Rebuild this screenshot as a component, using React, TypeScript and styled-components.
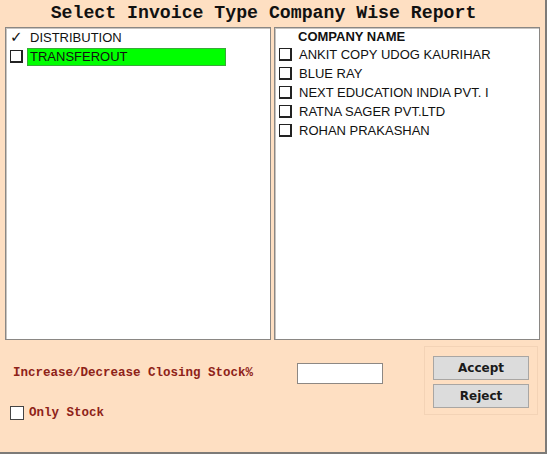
import React from "react";
import styled, { createGlobalStyle } from "styled-components";

const GlobalStyle = createGlobalStyle`
  html, body {
    margin: 0;
    padding: 0;
    background: #ffffff;
  }
`;

const invoiceTypes = [
  { name: "DISTRIBUTION", checked: true, selected: false },
  { name: "TRANSFEROUT", checked: false, selected: true },
];

const companies = [
  "ANKIT COPY UDOG KAURIHAR",
  "BLUE RAY",
  "NEXT EDUCATION INDIA PVT. I",
  "RATNA SAGER PVT.LTD",
  "ROHAN PRAKASHAN",
];

function App() {
  return (
    <>
      <GlobalStyle />
      <Frame>
        <Title>Select Invoice Type Company Wise Report</Title>
        <Panels>
          <ListBox>
            {invoiceTypes.map((t) => (
              <Row key={t.name}>
                {t.checked ? <Tick>✓</Tick> : <Box />}
                <ItemText selected={t.selected}>{t.name}</ItemText>
              </Row>
            ))}
          </ListBox>
          <ListBox>
            <HeaderRow>
              <Spacer />
              <HeaderText>COMPANY NAME</HeaderText>
            </HeaderRow>
            {companies.map((c) => (
              <Row key={c}>
                <Box />
                <ItemText>{c}</ItemText>
              </Row>
            ))}
          </ListBox>
        </Panels>
        <Bottom>
          <Options>
            <StockRow>
              <StockLabel>Increase/Decrease Closing Stock%</StockLabel>
              <PercentInput />
            </StockRow>
            <CheckRow>
              <PlainCheck />
              <Label>Only Stock</Label>
            </CheckRow>
          </Options>
          <ButtonGroup>
            <Button>Accept</Button>
            <Button>Reject</Button>
          </ButtonGroup>
        </Bottom>
      </Frame>
    </>
  );
}

const Frame = styled.div`
  width: 545px;
  height: 452px;
  background: #fedfc2;
  border-right: 2px solid #7d7b78;
  border-bottom: 2px solid #7d7b78;
  display: flex;
  flex-direction: column;
`;

const Title = styled.div`
  height: 27px;
  line-height: 27px;
  text-align: center;
  font-family: "Liberation Mono", "Courier New", monospace;
  font-weight: bold;
  font-size: 18.2px;
  color: #111;
  padding-right: 18px;
`;

const Panels = styled.div`
  display: flex;
  gap: 3px;
  padding-left: 5px;
  height: 313px;
`;

const ListBox = styled.div`
  width: 260px;
  height: 311px;
  background: #fff;
  border: 1px solid #8a8784;
  box-shadow: inset 1px 1px 0 #c8c4c0;
  padding: 0 0 0 4px;
  box-sizing: content-box;
`;

const Row = styled.div`
  display: flex;
  align-items: center;
  height: 19px;
`;

const HeaderRow = styled(Row)`
  height: 17px;
`;

const Box = styled.span`
  width: 10px;
  height: 10px;
  border: 1px solid #222;
  border-right-width: 2px;
  border-bottom-width: 2px;
  background: #fff;
  flex: none;
  margin-right: 4px;
`;

const Tick = styled.span`
  width: 17px;
  font-family: "DejaVu Sans", sans-serif;
  font-weight: bold;
  font-size: 15px;
  line-height: 19px;
  color: #111;
  flex: none;
`;

const Spacer = styled.span`
  width: 17px;
  flex: none;
`;

const ItemText = styled.span<{ selected?: boolean }>`
  font-family: "Liberation Sans", Arial, sans-serif;
  font-size: 13px;
  color: #111;
  line-height: 16px;
  padding-left: 2px;
  border: 1px solid transparent;
  ${(p) =>
    p.selected
      ? `
    background: #00ff00;
    border-color: #3aa83a;
    width: 195px;
  `
      : ""}
`;

const HeaderText = styled.span`
  font-family: "Liberation Sans", Arial, sans-serif;
  font-size: 13px;
  font-weight: bold;
  color: #111;
  padding-left: 2px;
`;

const Bottom = styled.div`
  flex: 1;
  display: flex;
`;

const Options = styled.div`
  flex: 1;
  display: flex;
  flex-direction: column;
  padding: 23px 0 0 13px;
`;

const StockRow = styled.div`
  display: flex;
  align-items: flex-start;
  gap: 44px;
  height: 21px;
`;

const Label = styled.span`
  font-family: "Liberation Mono", "Courier New", monospace;
  font-weight: bold;
  font-size: 12.5px;
  line-height: 16px;
  color: #8e2218;
`;

const StockLabel = styled(Label)`
  padding-top: 2px;
`;

const PercentInput = styled.div`
  width: 84px;
  height: 19px;
  background: #fff;
  border: 1px solid #8d8883;
`;

const CheckRow = styled.div`
  display: flex;
  align-items: center;
  gap: 5px;
  margin: 21px 0 0 -3px;
`;

const PlainCheck = styled.span`
  width: 12px;
  height: 12px;
  background: #fff;
  border: 1px solid #444;
`;

const ButtonGroup = styled.div`
  align-self: flex-start;
  margin: 6px 7px 0 0;
  width: 96px;
  padding: 9px 8px 6px 8px;
  border: 1px solid #f3d3b6;
  display: flex;
  flex-direction: column;
  gap: 4px;
`;

const Button = styled.div`
  height: 22px;
  background: #dcdcdc;
  border: 1px solid #a9a6a3;
  display: flex;
  align-items: center;
  justify-content: center;
  font-family: "DejaVu Sans", Tahoma, sans-serif;
  font-weight: bold;
  font-size: 12px;
  color: #1a1a1a;
`;

export default App;
